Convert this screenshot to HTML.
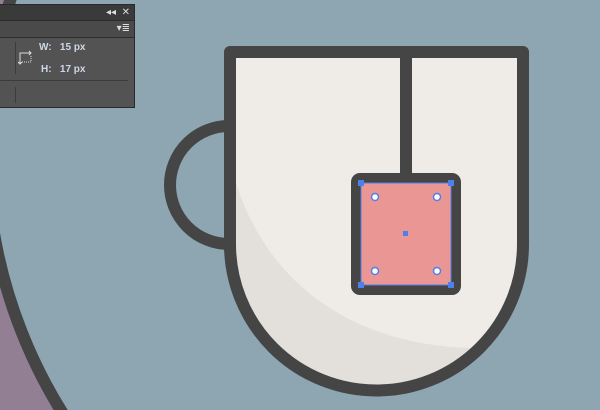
<html style="overflow:hidden"><body style="margin:0;width:600px;height:410px;overflow:hidden;background:#8ea5b2;font-family:'Liberation Sans',sans-serif;position:relative">
<svg width="600" height="410" style="position:absolute;left:0;top:0">
<defs><clipPath id="c"><path d="M236 58 H517 V244 A140.5 140.5 0 0 1 236 244 Z"/></clipPath></defs>
<rect x="0" y="0" width="600" height="410" fill="#927f94"/>
<circle cx="482" cy="150" r="495" fill="#8ea5b2" stroke="#454545" stroke-width="12"/>
<circle cx="229" cy="185" r="59" fill="none" stroke="#454545" stroke-width="12"/>
<path d="M230 52 H523 V244 A146.5 146.5 0 0 1 230 244 Z" fill="#efebe7"/>
<path d="M236 183 C270 290 360 345 470 348 L480 420 L200 420 Z" fill="#e3dfdb" clip-path="url(#c)"/>
<path d="M230 52 H523 V244 A146.5 146.5 0 0 1 230 244 Z" fill="none" stroke="#454545" stroke-width="12" stroke-linejoin="round"/>
<rect x="400" y="50" width="12" height="130" fill="#454545"/>
<rect x="351" y="173" width="110" height="122" rx="9" fill="#454545"/>
<rect x="361" y="183" width="90" height="102" fill="#ea9695" stroke="#4f7fea" stroke-width="1"/>
<g fill="#4f7fea"><rect x="358" y="180" width="6" height="6"/><rect x="448" y="180" width="6" height="6"/><rect x="358" y="282" width="6" height="6"/><rect x="448" y="282" width="6" height="6"/><rect x="403" y="231" width="5" height="5"/></g>
<g fill="#fff" stroke="#4f7fea" stroke-width="1.5"><circle cx="375" cy="197" r="3.5"/><circle cx="437" cy="197" r="3.5"/><circle cx="375" cy="271" r="3.5"/><circle cx="437" cy="271" r="3.5"/></g>
</svg>
<div style="position:absolute;left:0;top:4px;width:134px;height:102px;background:#535353;border:1px solid #2a2a2a;border-left:none;border-top:1px solid #2a2a2a;overflow:hidden">
<div style="height:15px;background:#3a3a3a;border-bottom:1px solid #2c2c2c;color:#ddd;font-size:10px;text-align:right;padding-right:4px;line-height:15px">◂◂ &nbsp;✕</div>
<div style="height:16px;background:#4a4a4a;border-bottom:1px solid #2e2e2e;color:#ddd;font-size:10px;text-align:right;padding-right:4px;line-height:16px">▾≣</div>
<div style="position:absolute;left:15px;top:37px;width:1px;height:32px;background:#3c3c3c"></div>
<svg style="position:absolute;left:18px;top:44px" width="16" height="16"><path d="M2 15 V4 H13 M11 2 L13 4 L11 6 M4 13 L2 15 L0 13" fill="none" stroke="#ddd" stroke-width="1"/><path d="M4 13 H13 V6" fill="none" stroke="#ddd" stroke-dasharray="1 1"/></svg>
<div style="position:absolute;left:39px;top:37px;color:#cfd8e8;font-size:10px;font-weight:bold">W:&nbsp;&nbsp; 15 px</div>
<div style="position:absolute;left:41px;top:59px;color:#cfd8e8;font-size:10px;font-weight:bold">H:&nbsp;&nbsp; 17 px</div>
<div style="position:absolute;left:0;top:75px;width:128px;height:1px;background:#3c3c3c"></div>
<div style="position:absolute;left:15px;top:82px;width:1px;height:16px;background:#3c3c3c"></div>
</div>
</body></html>
